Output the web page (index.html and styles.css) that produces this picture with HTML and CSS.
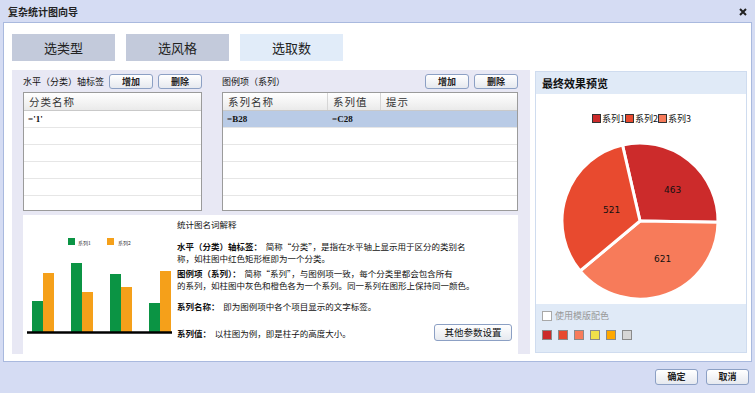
FILE: index.html
```html
<!DOCTYPE html>
<html lang="zh-CN">
<head>
    <meta charset="UTF-8">
    <title>复杂统计图向导</title>
    <link rel="stylesheet" href="styles.css">
</head>
<body>
    <div class="dialog">
        <div class="titlebar">
            <span class="title">复杂统计图向导</span>
            <svg class="close" width="8" height="8" viewBox="0 0 8 8">
                <path d="M1 1 L7 7 M7 1 L1 7" stroke="#222" stroke-width="2"/>
            </svg>
        </div>

        <div class="content">
            <div class="tabs">
                <div class="tab">选类型</div>
                <div class="tab">选风格</div>
                <div class="tab active">选取数</div>
            </div>

            <div class="main">
                <div class="editor">
                    <div class="lists">
                        <div class="list-block cat">
                            <div class="list-head">
                                <span class="list-label">水平（分类）轴标签</span>
                                <button class="btn">增加</button>
                                <button class="btn">删除</button>
                            </div>
                            <div class="grid">
                                <div class="row head"><div class="cell">分类名称</div></div>
                                <div class="row"><div class="cell val">='1'</div></div>
                                <div class="row"><div class="cell"></div></div>
                                <div class="row"><div class="cell"></div></div>
                                <div class="row"><div class="cell"></div></div>
                                <div class="row"><div class="cell"></div></div>
                                <div class="row"><div class="cell"></div></div>
                            </div>
                        </div>

                        <div class="list-block series">
                            <div class="list-head">
                                <span class="list-label">图例项（系列）</span>
                                <span class="spacer"></span>
                                <button class="btn">增加</button>
                                <button class="btn">删除</button>
                            </div>
                            <div class="grid">
                                <div class="row head">
                                    <div class="cell c1">系列名称</div>
                                    <div class="cell c2">系列值</div>
                                    <div class="cell c3">提示</div>
                                </div>
                                <div class="row selected">
                                    <div class="cell c1 val">=B28</div>
                                    <div class="cell c2 val">=C28</div>
                                    <div class="cell c3"></div>
                                </div>
                                <div class="row"><div class="cell"></div></div>
                                <div class="row"><div class="cell"></div></div>
                                <div class="row"><div class="cell"></div></div>
                                <div class="row"><div class="cell"></div></div>
                                <div class="row"><div class="cell"></div></div>
                            </div>
                        </div>
                    </div>

                    <div class="help">
                        <svg class="sample" width="152" height="139" viewBox="0 0 152 139">
                            <rect x="45" y="23" width="7" height="7" fill="#0b9444"/>
                            <text x="55" y="29.5" class="tiny">系列1</text>
                            <rect x="84" y="23" width="7" height="7" fill="#f5a01a"/>
                            <text x="95" y="29.5" class="tiny">系列2</text>

                            <rect x="9" y="86" width="11" height="31" fill="#0b9444"/>
                            <rect x="20" y="58" width="11" height="59" fill="#f5a01a"/>
                            <rect x="48" y="48" width="11" height="69" fill="#0b9444"/>
                            <rect x="59" y="77" width="11" height="40" fill="#f5a01a"/>
                            <rect x="87" y="59" width="11" height="58" fill="#0b9444"/>
                            <rect x="98" y="72" width="11" height="45" fill="#f5a01a"/>
                            <rect x="126" y="88" width="11" height="29" fill="#0b9444"/>
                            <rect x="137" y="56" width="11" height="61" fill="#f5a01a"/>
                            <line x1="4" y1="117.5" x2="149" y2="117.5" stroke="#000" stroke-width="2.5"/>
                        </svg>

                        <div class="notes">
                            <p class="notes-title">统计图名词解释</p>
                            <p class="n1"><b>水平（分类）轴标签：</b>&nbsp;&nbsp;简称“分类”，是指在水平轴上显示用于区分的类别名<br>称，如柱图中红色矩形框即为一个分类。</p>
                            <p class="n2"><b>图例项（系列）：</b>&nbsp;&nbsp;简称“系列”，与图例项一致，每个分类里都会包含所有<br>的系列，如柱图中灰色和橙色各为一个系列。同一系列在图形上保持同一颜色。</p>
                            <p class="n3"><b>系列名称：</b>&nbsp;&nbsp;即为图例项中各个项目显示的文字标签。</p>
                            <div class="n4">
                                <p><b>系列值：</b>&nbsp;&nbsp;以柱图为例，即是柱子的高度大小。</p>
                                <button class="btn wide">其他参数设置</button>
                            </div>
                        </div>
                    </div>
                </div>

                <div class="preview">
                    <div class="preview-head">最终效果预览</div>
                    <div class="preview-body">
                        <svg width="210" height="210" viewBox="0 0 210 210">
                            <rect x="56.5" y="20.5" width="8" height="8" fill="#cc2b2b" stroke="#333"/>
                            <text x="66" y="28" class="legend">系列1</text>
                            <rect x="89.5" y="20.5" width="8" height="8" fill="#e84a2f" stroke="#333"/>
                            <text x="99" y="28" class="legend">系列2</text>
                            <rect x="122.5" y="20.5" width="8" height="8" fill="#f77b5a" stroke="#333"/>
                            <text x="132" y="28" class="legend">系列3</text>

                            <g stroke="#fff" stroke-width="3">
                                <path d="M104 127 L86.5 51 A78 78 0 0 1 182 128.2 Z" fill="#cc2b2b"/>
                                <path d="M104 127 L182 128.2 A78 78 0 0 1 44.1 177 Z" fill="#f77b5a"/>
                                <path d="M104 127 L44.1 177 A78 78 0 0 1 86.5 51 Z" fill="#e84a2f"/>
                            </g>
                            <text x="128" y="99" class="pie-label">463</text>
                            <text x="67" y="119" class="pie-label">521</text>
                            <text x="118" y="168" class="pie-label">621</text>
                        </svg>
                    </div>
                    <div class="preview-foot">
                        <label class="check"><span class="box"></span>使用模版配色</label>
                        <div class="swatches">
                            <span class="swatch" style="background: #cc2b2b"></span>
                            <span class="swatch" style="background: #e84a2f"></span>
                            <span class="swatch" style="background: #f77b5a"></span>
                            <span class="swatch" style="background: #f0e04a"></span>
                            <span class="swatch" style="background: #ffa800"></span>
                            <span class="swatch" style="background: #d6d6d6"></span>
                        </div>
                    </div>
                </div>
            </div>
        </div>

        <div class="footer">
            <button class="btn ok">确定</button>
            <button class="btn ok">取消</button>
        </div>
    </div>
</body>
</html>
```

FILE: styles.css
```css
body {
    margin: 0;
    font-family: "Noto Sans CJK SC", "DejaVu Sans", sans-serif;
    background: #d5dcf3;
    color: #111;
}

.dialog {
    width: 755px;
    height: 393px;
    display: flex;
    flex-direction: column;
}

.titlebar {
    height: 22px;
    display: flex;
    align-items: center;
    justify-content: space-between;
    padding: 0 8px 0 8px;
}

.title {
    font-size: 10px;
    font-weight: bold;
    color: #222;
}

.close {
    margin-top: 2px;
}

.content {
    height: 340px;
    margin: 0 3px;
    border: 1px solid #a9b9de;
    background: #fff;
    padding: 11px 0 0 8px;
    box-sizing: border-box;
}

.tabs {
    display: flex;
    gap: 11px;
}

.tab {
    width: 103px;
    height: 27px;
    background: #c3cadb;
    font-size: 13px;
    color: #222;
    display: flex;
    align-items: center;
    justify-content: center;
}

.tab.active {
    background: #e1ecf9;
}

.main {
    display: flex;
    gap: 5px;
    margin-top: 9px;
}

.editor {
    width: 518px;
    height: 284px;
    background: #e8e8f4;
    padding: 4px 12px 0 11px;
    box-sizing: border-box;
    display: flex;
    flex-direction: column;
}

.lists {
    display: flex;
    justify-content: space-between;
}

.list-block.cat {
    width: 179px;
}

.list-block.series {
    width: 296px;
}

.list-head {
    height: 15px;
    display: flex;
    align-items: center;
    gap: 5px;
    margin-bottom: 3px;
}

.list-label {
    flex: none;
    white-space: nowrap;
    font-size: 9px;
    color: #111;
}

.spacer {
    flex: 1;
}

.btn {
    font-family: inherit;
    font-size: 9px;
    font-weight: bold;
    color: #222;
    height: 15px;
    width: 44px;
    padding: 0;
    border: 1px solid #8ca0c4;
    border-radius: 3px;
    background: linear-gradient(#ffffff, #e6e9ef);
    line-height: 13px;
}

.grid {
    height: 119px;
    border: 1px solid #9b9b9b;
    background: #fff;
    box-sizing: border-box;
    overflow: hidden;
}

.row {
    display: flex;
    height: 17px;
    border-bottom: 1px solid #e6e6e6;
    box-sizing: border-box;
}

.row.head {
    height: 18px;
    background: linear-gradient(#ffffff, #eaeaea);
    border-bottom: 1px solid #c9c9c9;
}

.row.head .cell {
    font-size: 10.5px;
    letter-spacing: 1px;
    color: #333;
    line-height: 17px;
}

.row.selected {
    background: #b9cbe6;
}

.cell {
    flex: 1;
    padding-left: 5px;
    font-size: 9px;
    line-height: 16px;
    box-sizing: border-box;
}

.cell.val {
    font-family: "Liberation Serif", serif;
    font-weight: bold;
    font-size: 9px;
    padding-left: 4px;
}

.cell.c1 {
    flex: none;
    width: 105px;
    border-right: 1px solid #d6d6d6;
}

.cell.c2 {
    flex: none;
    width: 53px;
    border-right: 1px solid #d6d6d6;
}

.row.selected .cell {
    border-right-color: transparent;
}

.help {
    margin-top: 4px;
    height: 139px;
    background: #fff;
    display: flex;
}

.sample {
    flex: none;
}

.tiny {
    font-size: 5px;
    fill: #333;
}

.notes {
    flex: 1;
    padding: 3px 6px 0 2px;
    font-size: 8.5px;
    color: #111;
}

.notes p {
    margin: 0;
    line-height: 12px;
}

.notes-title {
    margin-bottom: 10px !important;
}

.n1 {
    margin-bottom: 3px !important;
}

.n2 {
    margin-bottom: 9px !important;
}

.n3 {
    margin-bottom: 12px !important;
}

.n4 {
    display: flex;
    align-items: center;
    justify-content: space-between;
}

.btn.wide {
    width: 78px;
    height: 17px;
    font-weight: normal;
    font-size: 9.5px;
    color: #111;
}

.preview {
    width: 212px;
    height: 282px;
    margin-top: 1px;
    border: 1px solid #cfdcef;
    box-sizing: border-box;
    display: flex;
    flex-direction: column;
}

.preview-head {
    height: 22px;
    background: #e0eaf7;
    font-size: 11px;
    font-weight: bold;
    padding-left: 6px;
    line-height: 22px;
    color: #111;
}

.preview-body {
    height: 210px;
    background: #fff;
}

.legend {
    font-size: 9px;
    fill: #111;
}

.pie-label {
    font-family: "DejaVu Sans", sans-serif;
    font-size: 9px;
    fill: #111;
}

.preview-foot {
    flex: 1;
    background: #e0eaf7;
    padding: 5px 6px 0 6px;
}

.check {
    display: flex;
    align-items: center;
    gap: 3px;
    font-size: 9px;
    color: #999;
}

.box {
    width: 8px;
    height: 8px;
    border: 1px solid #a8a8a8;
    background: #fff;
}

.swatches {
    display: flex;
    gap: 6px;
    margin-top: 8px;
}

.swatch {
    width: 8px;
    height: 8px;
    border: 1px solid #8a8a8a;
}

.footer {
    flex: 1;
    display: flex;
    justify-content: flex-end;
    align-items: center;
    gap: 8px;
    padding: 0 6px 2px 0;
}

.btn.ok {
    width: 43px;
    height: 16px;
}
```
